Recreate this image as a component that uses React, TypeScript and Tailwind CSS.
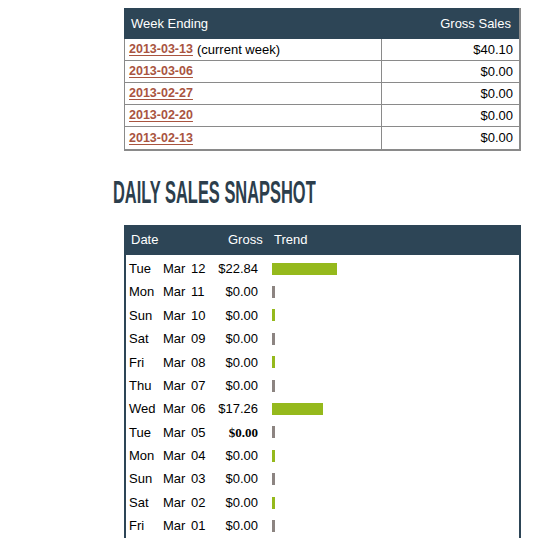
import React from 'react';

const weeks = [
  { date: '2013-03-13', note: '(current week)', gross: '$40.10' },
  { date: '2013-03-06', gross: '$0.00' },
  { date: '2013-02-27', gross: '$0.00' },
  { date: '2013-02-20', gross: '$0.00' },
  { date: '2013-02-13', gross: '$0.00' },
];

type Day = { dow: string; day: string; gross: string; bar: number; tone: 'green' | 'gray'; bold?: boolean };

const days: Day[] = [
  { dow: 'Tue', day: '12', gross: '$22.84', bar: 65, tone: 'green' },
  { dow: 'Mon', day: '11', gross: '$0.00', bar: 3, tone: 'gray' },
  { dow: 'Sun', day: '10', gross: '$0.00', bar: 3, tone: 'green' },
  { dow: 'Sat', day: '09', gross: '$0.00', bar: 3, tone: 'gray' },
  { dow: 'Fri', day: '08', gross: '$0.00', bar: 3, tone: 'green' },
  { dow: 'Thu', day: '07', gross: '$0.00', bar: 3, tone: 'gray' },
  { dow: 'Wed', day: '06', gross: '$17.26', bar: 51, tone: 'green' },
  { dow: 'Tue', day: '05', gross: '$0.00', bar: 3, tone: 'gray', bold: true },
  { dow: 'Mon', day: '04', gross: '$0.00', bar: 3, tone: 'green' },
  { dow: 'Sun', day: '03', gross: '$0.00', bar: 3, tone: 'gray' },
  { dow: 'Sat', day: '02', gross: '$0.00', bar: 3, tone: 'green' },
  { dow: 'Fri', day: '01', gross: '$0.00', bar: 3, tone: 'gray' },
];

const App: React.FC = () => {
  return (
    <div className="min-h-[540px] bg-white pt-2 pl-[113px] font-['Liberation_Sans',Arial,sans-serif] text-[13px] text-black">
      {/* Weekly totals */}
      <div className="ml-[11px] w-[397px] border-r-2 border-b-2 border-[#8a8a8a]">
        <div className="flex h-[31px] items-center justify-between bg-[#2d4556] pl-[7px] pr-[8px] text-white">
          <span>Week Ending</span>
          <span>Gross Sales</span>
        </div>
        {weeks.map((w) => (
          <div key={w.date} className="flex h-[22px] border-b border-l border-[#8a8a8a] last:border-b-0">
            <div className="flex w-[257px] items-center border-r border-[#8a8a8a] pl-[4px]">
              <a href="#" className="font-bold text-[12.5px] text-[#a9543f] underline underline-offset-2">
                {w.date}
              </a>
              {w.note && <span className="ml-[4px]">{w.note}</span>}
            </div>
            <div className="flex flex-1 items-center justify-end pr-[6px]">{w.gross}</div>
          </div>
        ))}
      </div>

      <h2 className="mt-[23px] h-[38px] origin-left scale-x-[0.53] whitespace-nowrap font-['Liberation_Sans',sans-serif] text-[31px] font-bold leading-[38px] text-[#2c3e4c]">
        DAILY SALES SNAPSHOT
      </h2>

      {/* Daily snapshot */}
      <div className="mt-[13px] ml-[11px] w-[397px]">
        <div className="flex h-[30px] items-center bg-[#2d4556] text-white">
          <span className="w-[104px] pl-[7px]">Date</span>
          <span className="w-[34px] text-right">Gross</span>
          <span className="ml-[12px]">Trend</span>
        </div>
        <div className="border-x-2 border-[#2d4556] pt-[2px]">
          {days.map((d, i) => (
            <div key={i} className="flex h-[23.4px] items-center pl-[3px]">
              <span className="w-[34px]">{d.dow}</span>
              <span className="w-[28px]">Mar</span>
              <span className="w-[22px]">{d.day}</span>
              <span className={`w-[45px] text-right ${d.bold ? 'font-bold font-["Liberation_Serif",serif]' : ''}`}>{d.gross}</span>
              <span
                className={`ml-[14px] h-[12px] ${d.tone === 'green' ? 'bg-[#95b91c]' : 'bg-[#8c8481]'}`}
                style={{ width: d.bar }}
              />
            </div>
          ))}
        </div>
      </div>
    </div>
  );
};

export default App;
